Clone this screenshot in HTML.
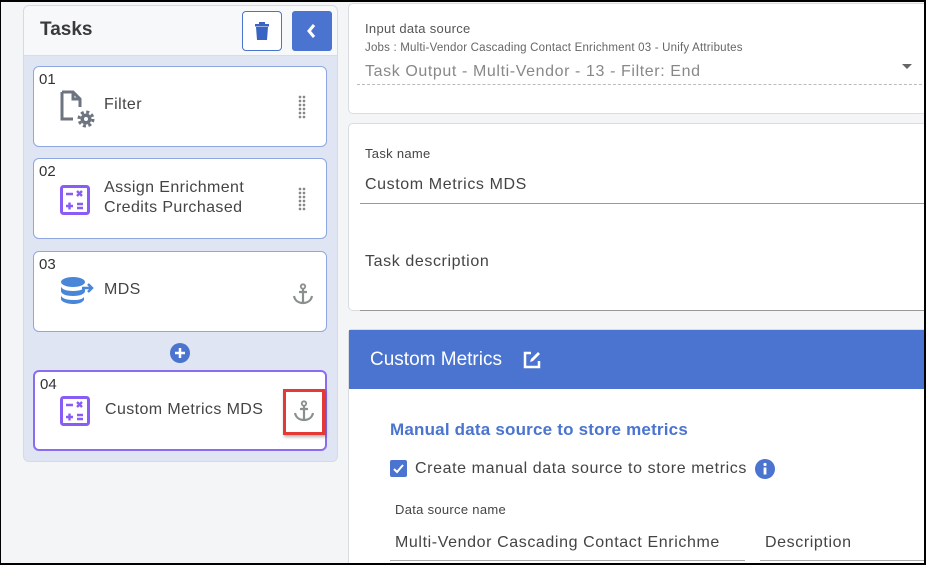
<!DOCTYPE html>
<html><head><meta charset="utf-8"><style>
*{box-sizing:border-box;margin:0;padding:0}
html,body{width:926px;height:565px;overflow:hidden}
body{background:#f4f5f7;font-family:"Liberation Sans",sans-serif;position:relative;color:#333}
.abs{position:absolute}
.frame{left:0;top:0;width:926px;height:565px;border:2px solid #000;border-left-width:1px;pointer-events:none;z-index:10}
.left{left:23px;top:5px;width:315px;height:457px;background:#dfe5f3;border-radius:6px;border:1px solid #d5dae3;overflow:hidden}
.lh{left:0;top:0;width:100%;height:50px;background:#f7f8fa;border-bottom:1px solid #d8dce4}
.card{position:absolute;left:9px;width:294px;height:81px;background:#fff;border:1px solid #8fa7e0;border-radius:6px}
.num{position:absolute;left:5px;top:4px;font-size:15px;color:#333}
.lbl{position:absolute;left:70px;font-size:16px;color:#444;line-height:20px;letter-spacing:.4px}
.grip{position:absolute;left:264px;top:28px;width:8px;height:24px;background-image:radial-gradient(circle,#888 1.2px,transparent 1.5px);background-size:4px 4px}
.panel{position:absolute;left:348px;width:590px;background:#fff;border:1px solid #d9dce1;border-radius:5px}
.t16{font-size:16px;letter-spacing:.6px}
.t13{font-size:13px;letter-spacing:.3px}
</style></head><body>
<div class="abs frame"></div>
<div class="abs left">
 <div class="abs lh">
  <div class="abs" style="left:16px;top:13px;font-size:19px;font-weight:bold;color:#3a3a3a">Tasks</div>
  <div class="abs" style="left:218px;top:5px;width:40px;height:40px;border:1px solid #4a74cf;border-radius:4px;background:#fff">
   <svg width="38" height="38" viewBox="0 0 38 38"><rect x="12" y="12" width="14" height="2.5" fill="#3a64c4"/><rect x="16" y="10" width="6" height="2" fill="#3a64c4"/><path d="M13 15h12l-1 13h-10z" fill="#3a64c4"/></svg></div>
  <div class="abs" style="left:268px;top:5px;width:40px;height:40px;background:#4a74cf;border-radius:3px">
   <svg width="40" height="40"><path d="M22 14l-5 6 5 6" stroke="#fff" stroke-width="3" fill="none"/></svg></div>
 </div>
 <div class="card" style="top:60px"><div class="num">01</div>
  <svg class="abs" style="left:25px;top:22px" width="40" height="40" viewBox="0 0 40 40"><path d="M3 3h11l7 7v8M21 10h-7V3M3 3v27h11" stroke="#6c7480" stroke-width="3" fill="none"/><circle cx="27" cy="30" r="5.5" fill="#6c7480"/><circle cx="27" cy="30" r="7" fill="none" stroke="#6c7480" stroke-width="3" stroke-dasharray="3 2.5"/><circle cx="27" cy="30" r="2" fill="#fff"/></svg>
  <div class="lbl" style="top:28px">Filter</div><div class="grip"></div></div>
 <div class="card" style="top:152px"><div class="num">02</div>
  <svg class="abs" style="left:26px;top:26px" width="30" height="30" viewBox="0 0 30 30"><rect x="1.5" y="1.5" width="27" height="27" rx="2" fill="none" stroke="#8a5cf6" stroke-width="3"/><path d="M6 9h7M17 6l5 5M22 6l-5 5M6 21h7M9.5 17.5v7M17 19h6M17 23h6" stroke="#8a5cf6" stroke-width="2.4"/></svg>
  <div class="lbl" style="top:19px">Assign Enrichment<br>Credits Purchased</div><div class="grip"></div></div>
 <div class="card" style="top:245px"><div class="num">03</div>
  <svg class="abs" style="left:26px;top:24px" width="36" height="32" viewBox="0 0 36 32"><ellipse cx="13" cy="6" rx="12" ry="5" fill="#4a86d8"/><path d="M1 10c0 3 5 5 12 5s12-2 12-5v5c0 3-5 5-12 5S1 18 1 15zM1 19c0 3 5 5 12 5s9-1 11-3v3c-2 3-6 4-11 4S1 26 1 23z" fill="#4a86d8"/><path d="M22 12h10M28 8l4 4-4 4" stroke="#4a86d8" stroke-width="2.5" fill="none"/></svg>
  <div class="lbl" style="top:28px">MDS</div>
  <svg class="abs" style="left:258px;top:31px" width="22" height="22" viewBox="0 0 22 22"><circle cx="11" cy="3.5" r="2.2" fill="none" stroke="#8a9090" stroke-width="1.8"/><path d="M11 6v14M7 9h8M2 13c1 5 5 7 9 7s8-2 9-7" stroke="#8a9090" stroke-width="2.2" fill="none"/></svg></div>
 <svg class="abs" style="left:146px;top:337px" width="20" height="20"><circle cx="10" cy="10" r="10" fill="#4a74cf"/><path d="M10 5v10M5 10h10" stroke="#fff" stroke-width="2.5"/></svg>
 <div class="card" style="top:364px;border:2px solid #8b6cf0"><div class="num">04</div>
  <svg class="abs" style="left:25px;top:24px" width="30" height="30" viewBox="0 0 30 30"><rect x="1.5" y="1.5" width="27" height="27" rx="2" fill="none" stroke="#8a5cf6" stroke-width="3"/><path d="M6 9h7M17 6l5 5M22 6l-5 5M6 21h7M9.5 17.5v7M17 19h6M17 23h6" stroke="#8a5cf6" stroke-width="2.4"/></svg>
  <div class="lbl" style="top:28px">Custom Metrics MDS</div>
  <div class="abs" style="left:248px;top:17px;width:42px;height:46px;border:3px solid #e53935;box-shadow:1px 2px 3px rgba(0,0,0,.3)"></div>
  <svg class="abs" style="left:258px;top:28px" width="22" height="22" viewBox="0 0 22 22"><circle cx="11" cy="3.5" r="2.2" fill="none" stroke="#8a9090" stroke-width="1.8"/><path d="M11 6v14M7 9h8M2 13c1 5 5 7 9 7s8-2 9-7" stroke="#8a9090" stroke-width="2.2" fill="none"/></svg></div>
</div>

<div class="panel" style="top:3px;height:111px">
 <div class="abs t13" style="left:16px;top:17px;color:#555">Input data source</div>
 <div class="abs" style="left:16px;top:38px;font-size:11.5px;color:#666;letter-spacing:.2px">Jobs : Multi-Vendor Cascading Contact Enrichment 03 - Unify Attributes</div>
 <div class="abs t16" style="left:16px;top:59px;color:#888">Task Output - Multi-Vendor - 13 - Filter: End</div>
 <div class="abs" style="left:553px;top:60px;width:0;height:0;border:5px solid transparent;border-top:5px solid #666"></div>
 <div class="abs" style="left:8px;top:80px;width:580px;border-top:1px dashed #bbb"></div>
</div>
<div class="panel" style="top:123px;height:188px">
 <div class="abs t13" style="left:16px;top:22px;color:#444">Task name</div>
 <div class="abs t16" style="left:16px;top:52px;color:#444">Custom Metrics MDS</div>
 <div class="abs" style="left:11px;top:79px;width:580px;border-top:1px solid #999"></div>
 <div class="abs t16" style="left:16px;top:129px;color:#444">Task description</div>
 <div class="abs" style="left:11px;top:186px;width:580px;border-top:1px solid #999"></div>
</div>
<div class="panel" style="top:329px;height:240px;border-radius:4px 4px 0 0">
 <div class="abs" style="left:0;top:0;width:100%;height:59px;background:#4a74cf"></div>
 <div class="abs" style="left:21px;top:19px;font-size:19px;color:#fff">Custom Metrics</div>
 <svg class="abs" style="left:173px;top:20px" width="20" height="20" viewBox="0 0 20 20"><path d="M9 3H3v14h14v-6" stroke="#fff" stroke-width="2.5" fill="none"/><path d="M8 12l1-3 7-7 2 2-7 7z" fill="#fff"/></svg>
 <div class="abs" style="left:41px;top:90px;font-size:17px;font-weight:bold;color:#4a74cf;letter-spacing:.2px">Manual data source to store metrics</div>
 <div class="abs" style="left:41px;top:130px;width:17px;height:17px;background:#4a74cf;border-radius:2px"><svg width="17" height="17"><path d="M4 9l3 3 6-7" stroke="#fff" stroke-width="2" fill="none"/></svg></div>
 <div class="abs t16" style="left:66px;top:129px;color:#444;display:flex;align-items:center;white-space:nowrap">Create manual data source to store metrics<svg style="margin-left:8px" width="20" height="20"><circle cx="10" cy="10" r="10" fill="#4a74cf"/><circle cx="10" cy="5.5" r="1.6" fill="#fff"/><rect x="8.6" y="8.5" width="2.8" height="7" fill="#fff"/></svg></div>
 <div class="abs t13" style="left:46px;top:172px;color:#444">Data source name</div>
 <div class="abs t16" style="left:46px;top:204px;color:#444;width:350px;white-space:nowrap;overflow:hidden">Multi-Vendor Cascading Contact Enrichme</div>
 <div class="abs" style="left:41px;top:230px;width:355px;border-top:1px solid #aaa"></div>
 <div class="abs t16" style="left:416px;top:204px;color:#444">Description</div>
 <div class="abs" style="left:411px;top:230px;width:180px;border-top:1px solid #aaa"></div>
</div>
</body></html>
